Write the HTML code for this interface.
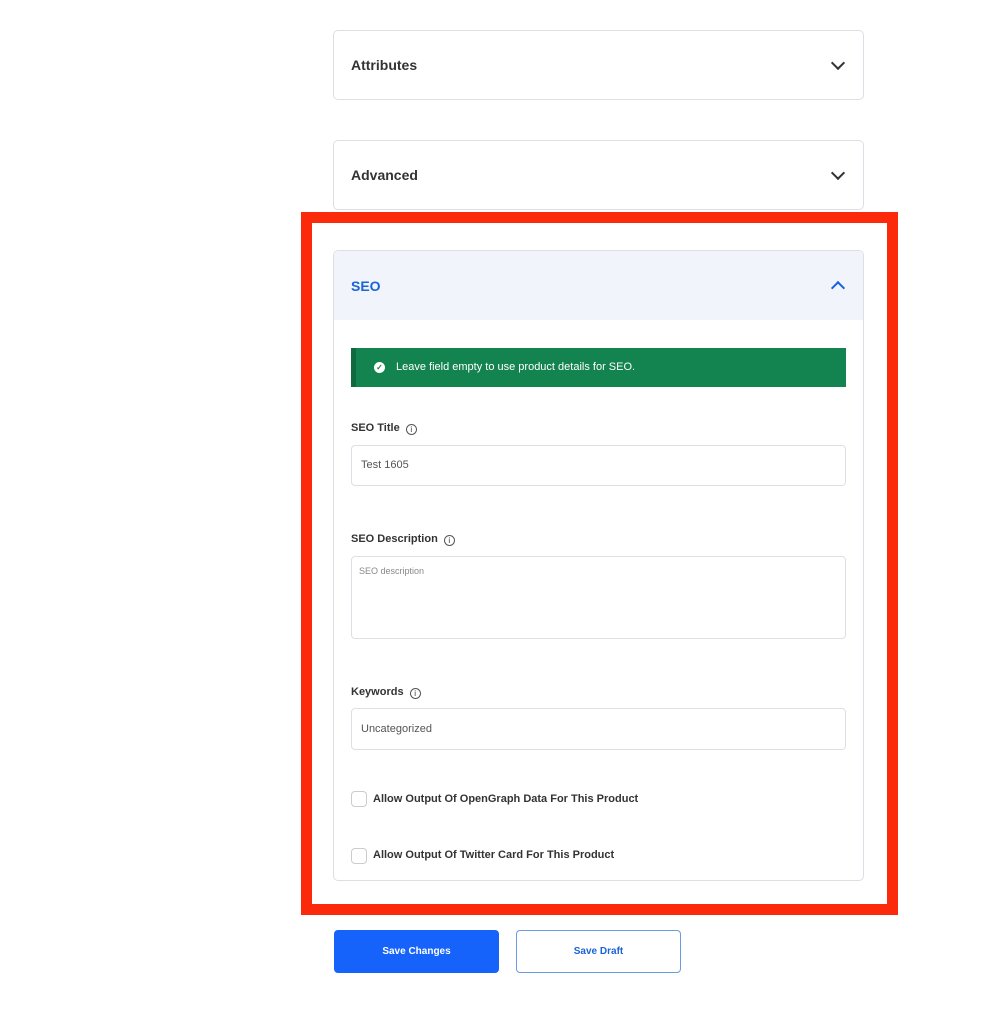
<!DOCTYPE html>
<html><head><meta charset="utf-8"><style>
*{box-sizing:border-box;margin:0;padding:0}
body{width:993px;height:1024px;background:#fff;position:relative;font-family:"Liberation Sans",sans-serif;overflow:hidden}
.a{position:absolute}
.card{position:absolute;left:333px;width:531px;border:1px solid #dcdfe4;border-radius:5px;background:#fff}
.h{font-weight:bold;font-size:14px;color:#333}
.chev{position:absolute;right:20px;width:10px;height:10px;border-right:2px solid #333;border-bottom:2px solid #333}
.lbl{position:absolute;left:351px;font-weight:bold;font-size:11px;color:#333}
.lbl i{display:inline-block;width:11px;height:11px;border:1px solid #555;border-radius:50%;font-style:normal;font-size:8px;text-align:center;line-height:9px;font-weight:normal;margin-left:6px;vertical-align:-1px}
.inp{position:absolute;left:351px;width:495px;border:1px solid #dcdfe4;border-radius:4px;font-size:11px;color:#555;padding-left:9px}
.cb{position:absolute;left:351px;width:16px;height:16px;border:1px solid #ccc;border-radius:4px}
.ct{position:absolute;left:373px;font-size:11px;font-weight:bold;color:#333}
</style></head><body>
<div class="card" style="top:30px;height:70px"><div class="a h" style="left:17px;top:26px">Attributes</div><div class="chev" style="top:27px;transform:rotate(45deg)"></div></div>
<div class="card" style="top:140px;height:70px"><div class="a h" style="left:17px;top:26px">Advanced</div><div class="chev" style="top:27px;transform:rotate(45deg)"></div></div>
<div class="a" style="left:301px;top:212px;width:597px;height:703px;border:11px solid #fb2a0a"></div>
<div class="card" style="top:250px;height:631px;overflow:hidden">
 <div class="a" style="left:0;top:0;width:100%;height:69px;background:#f1f5fb"></div>
 <div class="a h" style="left:17px;top:27px;color:#1a63d8">SEO</div>
 <div class="chev" style="top:32px;transform:rotate(-135deg);border-color:#1a63d8"></div>
</div>
<div class="a" style="left:351px;top:348px;width:495px;height:39px;background:#13834f;border-left:5px solid #0f6b3f"></div>
<div class="a" style="left:374px;top:362px;width:11px;height:11px;border-radius:50%;background:#fff;color:#13834f;font-size:8px;text-align:center;line-height:11px;font-weight:bold">✓</div>
<div class="a" style="left:396px;top:361px;font-size:11px;color:#fff">Leave field empty to use product details for SEO.</div>
<div class="lbl" style="top:422px">SEO Title<i>i</i></div>
<div class="inp" style="top:445px;height:41px;line-height:39px">Test 1605</div>
<div class="lbl" style="top:533px">SEO Description<i>i</i></div>
<div class="inp" style="top:556px;height:83px;padding-top:9px;font-size:9px;color:#888;padding-left:7px">SEO description</div>
<div class="lbl" style="top:686px">Keywords<i>i</i></div>
<div class="inp" style="top:708px;height:42px;line-height:40px">Uncategorized</div>
<div class="cb" style="top:791px"></div><div class="ct" style="top:793px">Allow Output Of OpenGraph Data For This Product</div>
<div class="cb" style="top:848px"></div><div class="ct" style="top:849px">Allow Output Of Twitter Card For This Product</div>
<div class="a" style="left:334px;top:930px;width:165px;height:43px;background:#1563fb;border-radius:4px;color:#fff;font-size:10px;font-weight:bold;text-align:center;line-height:43px">Save Changes</div>
<div class="a" style="left:516px;top:930px;width:165px;height:43px;border:1px solid #6a9be0;border-radius:4px;color:#1a63d8;font-size:10px;font-weight:bold;text-align:center;line-height:41px">Save Draft</div>
</body></html>
